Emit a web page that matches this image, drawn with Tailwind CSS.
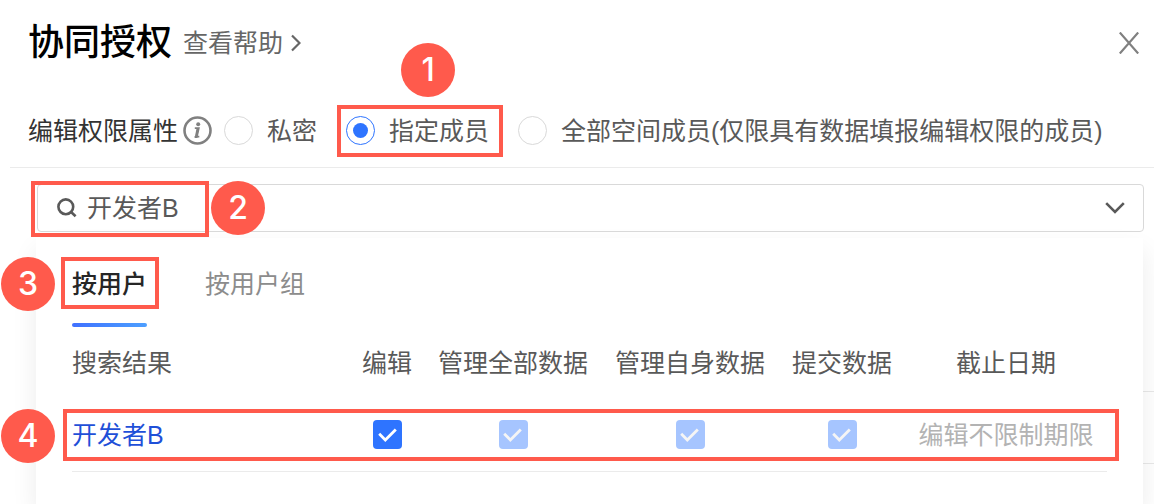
<!DOCTYPE html>
<html lang="zh">
<head>
    <title>协同授权</title>
    <meta charset="utf-8">
    <meta name="viewport" content="width=device-width, initial-scale=1">
    <script src="https://cdn.jsdelivr.net/npm/@tailwindcss/browser@4"></script>
</head>
<body class="bg-white font-['Liberation_Sans','Noto_Sans_CJK_SC',sans-serif] text-[25px] leading-8 text-[#595959]">
<div class="flex flex-col h-screen overflow-hidden whitespace-nowrap">
    <!-- header -->
    <header class="flex items-center h-[86px] shrink-0 pl-7 pr-3">
        <h1 class="text-[36px] leading-[48px] font-medium text-black">协同授权</h1>
        <a href="#" class="flex items-center gap-2 ml-[11px] text-[#666]">查看帮助
            <svg class="w-[10px] h-[18px]" viewBox="0 0 10 18" fill="none" stroke="currentColor" stroke-width="2.200">
                <path d="M1 1.500L8.500 9L1 16.500"/>
            </svg>
        </a>
        <button class="ml-auto p-[3px] text-[#808080]" aria-label="关闭">
            <svg class="w-[20px] h-[22px]" viewBox="0 0 20 22" fill="none" stroke="currentColor" stroke-width="2.200">
                <path d="M0.800 0.500L19.200 21.500M19.200 0.500L0.800 21.500"/>
            </svg>
        </button>
    </header>

    <!-- permission type -->
    <div class="flex items-center h-[74px] shrink-0 mt-2 ml-[10px] pl-[18px] border-b border-[#ebebeb]">
        <span class="text-[#333]">编辑权限属性</span>
        <svg class="size-[29px] ml-[5px] text-[#808080]" viewBox="0 0 29 29" fill="none">
            <circle cx="14.500" cy="14.500" r="13" stroke="currentColor" stroke-width="2.600"/>
            <circle cx="15.200" cy="8.200" r="2" fill="currentColor"/>
            <path d="M11.800 12.200H15.800L13.900 20.600H16.300M11.600 21H14.500" stroke="currentColor" stroke-width="1.800"/>
            <path d="M14.800 12.200L13 21" stroke="currentColor" stroke-width="2.400"/>
        </svg>
        <div class="flex items-center gap-[29px] ml-3">
            <label class="flex items-center gap-[14px]">
                <input type="radio" name="scope" class="appearance-none size-[29px] p-[6px] border border-[#d9d9d9] rounded-full bg-clip-content checked:border-[#2e74ff] checked:bg-[#2e74ff]">私密
            </label>
            <label class="relative flex items-center gap-[14px]">
                <input type="radio" name="scope" checked class="appearance-none size-[29px] p-[6px] border border-[#d9d9d9] rounded-full bg-clip-content checked:border-[#2e74ff] checked:bg-[#2e74ff]">指定成员
                <span class="absolute -left-[9px] -right-[14px] -inset-y-[10px] border-4 border-[#ff5a4c]"></span>
                <span class="absolute left-[55px] -top-[72px] grid place-items-center size-[54px] rounded-full bg-[#ff5a4c] font-[Inter,sans-serif] text-[32px] font-medium text-white">1</span>
            </label>
            <label class="flex items-center gap-[14px]">
                <input type="radio" name="scope" class="appearance-none size-[29px] p-[6px] border border-[#d9d9d9] rounded-full bg-clip-content checked:border-[#2e74ff] checked:bg-[#2e74ff]">全部空间成员(仅限具有数据填报编辑权限的成员)
            </label>
        </div>
    </div>

    <!-- search -->
    <div class="relative z-10 flex items-center h-12 shrink-0 mt-4 ml-[37px] mr-[10px] pl-[19px] pr-[18px] border border-[#d9d9d9] rounded-sm">
        <svg class="size-[20px] shrink-0" viewBox="0 0 20 20" fill="none" stroke="currentColor" stroke-width="2.600">
            <circle cx="8.800" cy="8.800" r="7.400"/>
            <path d="M13.800 13.800L18.600 18.200"/>
        </svg>
        <input type="text" value="开发者B" aria-label="搜索成员" class="flex-1 min-w-0 ml-[10px] outline-none">
        <button aria-label="展开">
            <svg class="w-[20px] h-[12px]" viewBox="0 0 20 12" fill="none" stroke="currentColor" stroke-width="2.600">
                <path d="M1.200 1.200L10 10L18.800 1.200"/>
            </svg>
        </button>
        <span class="absolute -left-[7px] -top-1 w-[178px] h-14 border-4 border-[#ff5a4c]"></span>
        <span class="absolute left-[173px] -top-1 grid place-items-center size-[54px] rounded-full bg-[#ff5a4c] font-[Inter,sans-serif] text-[32px] font-medium text-white">2</span>
    </div>

    <!-- dropdown -->
    <div class="relative flex flex-col flex-1 mt-[6px] pl-9 pr-[11px]">
        <!-- member list under the dropdown -->
        <div class="absolute right-0 top-[153px] w-20 h-[73px] border-y border-[#e8e8e8]"></div>
        <div class="relative flex-1 px-9 bg-white shadow-[0_12px_24px_rgba(0,0,0,0.08)]">
            <div class="flex gap-[58px] h-[89px]" role="tablist">
                <button class="relative pt-[2px] font-medium text-[#262626]" role="tab" aria-selected="true">按用户
                    <span class="absolute inset-x-0 bottom-0 h-1 rounded-full bg-linear-to-r from-[#4070ff] to-[#4d9fff]"></span>
                    <span class="absolute -left-[11px] -right-[12px] top-[19px] h-[52px] border-4 border-[#ff5a4c]"></span>
                    <span class="absolute -left-[71px] top-[19px] grid place-items-center size-[54px] rounded-full bg-[#ff5a4c] font-[Inter,sans-serif] text-[32px] font-medium text-white">3</span>
                </button>
                <button class="pt-[2px] text-[#8c8c8c]" role="tab" aria-selected="false">按用户组</button>
            </div>
            <div class="relative">
                <table class="w-full table-fixed text-center">
                    <thead>
                    <tr class="h-[72px]">
                        <th class="font-normal text-left">搜索结果</th>
                        <th class="w-[76px] font-normal">编辑</th>
                        <th class="w-[176px] font-normal">管理全部数据</th>
                        <th class="w-[178px] font-normal">管理自身数据</th>
                        <th class="w-[126px] font-normal">提交数据</th>
                        <th class="w-[202px] font-normal">截止日期</th>
                    </tr>
                    </thead>
                    <tbody>
                    <tr class="h-[72px] border-b border-[#ebebeb]">
                        <td class="text-left text-[#1f50d8]">开发者B</td>
                        <td>
                            <span class="grid place-items-center">
                                <input type="checkbox" checked aria-label="编辑" class="col-start-1 row-start-1 appearance-none size-[29px] rounded-sm bg-[#2e74ff]">
                                <svg class="col-start-1 row-start-1 size-[29px] text-white pointer-events-none" viewBox="0 0 29 29" fill="none" stroke="currentColor" stroke-width="2.800">
                                    <path d="M6.200 13.800L12.300 19.900L22.800 9.400"/>
                                </svg>
                            </span>
                        </td>
                        <td>
                            <span class="grid place-items-center">
                                <input type="checkbox" checked disabled aria-label="管理全部数据" class="col-start-1 row-start-1 appearance-none size-[29px] rounded-sm bg-[#a6c5ff]">
                                <svg class="col-start-1 row-start-1 size-[29px] text-[#f5f5f5] pointer-events-none" viewBox="0 0 29 29" fill="none" stroke="currentColor" stroke-width="2.800">
                                    <path d="M5.200 13.800L11.300 19.900L21.800 9.400"/>
                                </svg>
                            </span>
                        </td>
                        <td>
                            <span class="grid place-items-center">
                                <input type="checkbox" checked disabled aria-label="管理自身数据" class="col-start-1 row-start-1 appearance-none size-[29px] rounded-sm bg-[#a6c5ff]">
                                <svg class="col-start-1 row-start-1 size-[29px] text-[#f5f5f5] pointer-events-none" viewBox="0 0 29 29" fill="none" stroke="currentColor" stroke-width="2.800">
                                    <path d="M5.200 13.800L11.300 19.900L21.800 9.400"/>
                                </svg>
                            </span>
                        </td>
                        <td>
                            <span class="grid place-items-center">
                                <input type="checkbox" checked disabled aria-label="提交数据" class="col-start-1 row-start-1 appearance-none size-[29px] rounded-sm bg-[#a6c5ff]">
                                <svg class="col-start-1 row-start-1 size-[29px] text-[#f5f5f5] pointer-events-none" viewBox="0 0 29 29" fill="none" stroke="currentColor" stroke-width="2.800">
                                    <path d="M5.200 13.800L11.300 19.900L21.800 9.400"/>
                                </svg>
                            </span>
                        </td>
                        <td class="text-[#b3b3b3]">编辑不限制期限</td>
                    </tr>
                    </tbody>
                </table>
                <span class="absolute -left-[9px] -right-[12px] top-[82px] h-[52px] border-4 border-[#ff5a4c]"></span>
                <span class="absolute -left-[71px] top-[82px] grid place-items-center size-[54px] rounded-full bg-[#ff5a4c] font-[Inter,sans-serif] text-[32px] font-medium text-white">4</span>
            </div>
        </div>
    </div>
</div>
</body>
</html>
